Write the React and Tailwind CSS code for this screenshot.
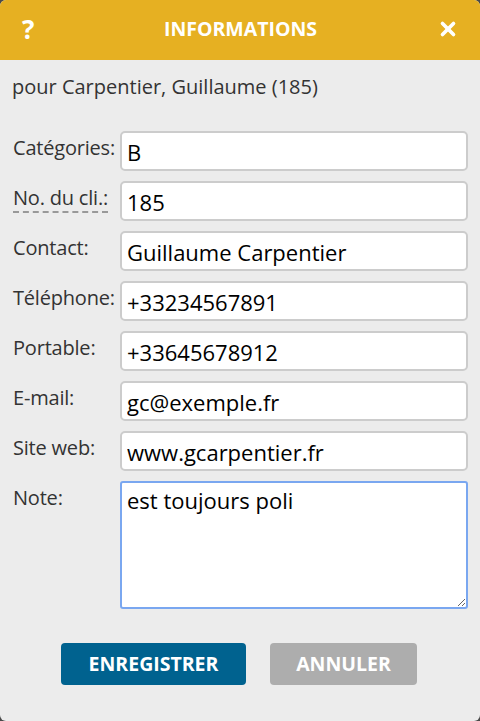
import { X } from "lucide-react";

const fields = [
  { label: "Catégories:", value: "B" },
  { label: "No. du cli.:", value: "185", abbr: true },
  { label: "Contact:", value: "Guillaume Carpentier" },
  { label: "Téléphone:", value: "+33234567891" },
  { label: "Portable:", value: "+33645678912" },
  { label: "E-mail:", value: "gc@exemple.fr" },
  { label: "Site web:", value: "www.gcarpentier.fr" },
];

export default function App() {
  return (
    <div className="h-[721px] w-[480px] bg-[#4a4a4a] font-['Open_Sans',sans-serif]">
      <div className="flex h-full flex-col overflow-hidden rounded-[6px] bg-[#ececec]">
        <header className="flex h-[60px] shrink-0 items-center justify-between bg-[#e6b022] pb-[3px] pl-[22px] pr-[21px] text-white">
          <span className="w-[22px] text-[26px] font-bold leading-none">?</span>
          <h1 className="text-[19.5px] font-bold leading-none">INFORMATIONS</h1>
          <X className="h-[22px] w-[22px]" strokeWidth={4} />
        </header>

        <p className="pl-[12px] pt-[14px] text-[20px] leading-[26px] text-[#333]">
          pour Carpentier, Guillaume (185)
        </p>

        <div className="mt-[31px] flex flex-col gap-[10px] pl-[13px] pr-[12px]">
          {fields.map((f) => (
            <div key={f.label} className="flex items-start">
              <label className="w-[107px] whitespace-nowrap pt-[3px] text-[20px] leading-[28px] tracking-[-0.2px] text-[#333]">
                {f.abbr ? (
                  <span className="border-b-2 border-dashed border-[#999]">{f.label}</span>
                ) : (
                  f.label
                )}
              </label>
              <input
                readOnly
                value={f.value}
                className="h-[40px] w-[348px] rounded-[5px] border-2 border-[#ccc] bg-white px-[5px] pt-[1px] text-[22px] text-black outline-none"
              />
            </div>
          ))}
          <div className="flex items-start">
            <label className="w-[107px] pt-[3px] text-[20px] leading-[28px] tracking-[-0.2px] text-[#333]">Note:</label>
            <textarea
              readOnly
              value="est toujours poli"
              className="h-[128px] w-[348px] resize-y rounded-[3px] border-2 border-[#7aa7f0] bg-white px-[5px] py-[2px] text-[22px] leading-[30px] text-black outline-none"
            />
          </div>
        </div>

        <div className="mt-[34px] flex gap-[24px] pl-[61px]">
          <button className="h-[42px] w-[185px] rounded-[4px] bg-[#00628f] text-[19.5px] font-bold text-white">
            ENREGISTRER
          </button>
          <button className="h-[42px] w-[147px] rounded-[4px] bg-[#adadad] text-[19.5px] font-bold text-white">
            ANNULER
          </button>
        </div>
      </div>
    </div>
  );
}
